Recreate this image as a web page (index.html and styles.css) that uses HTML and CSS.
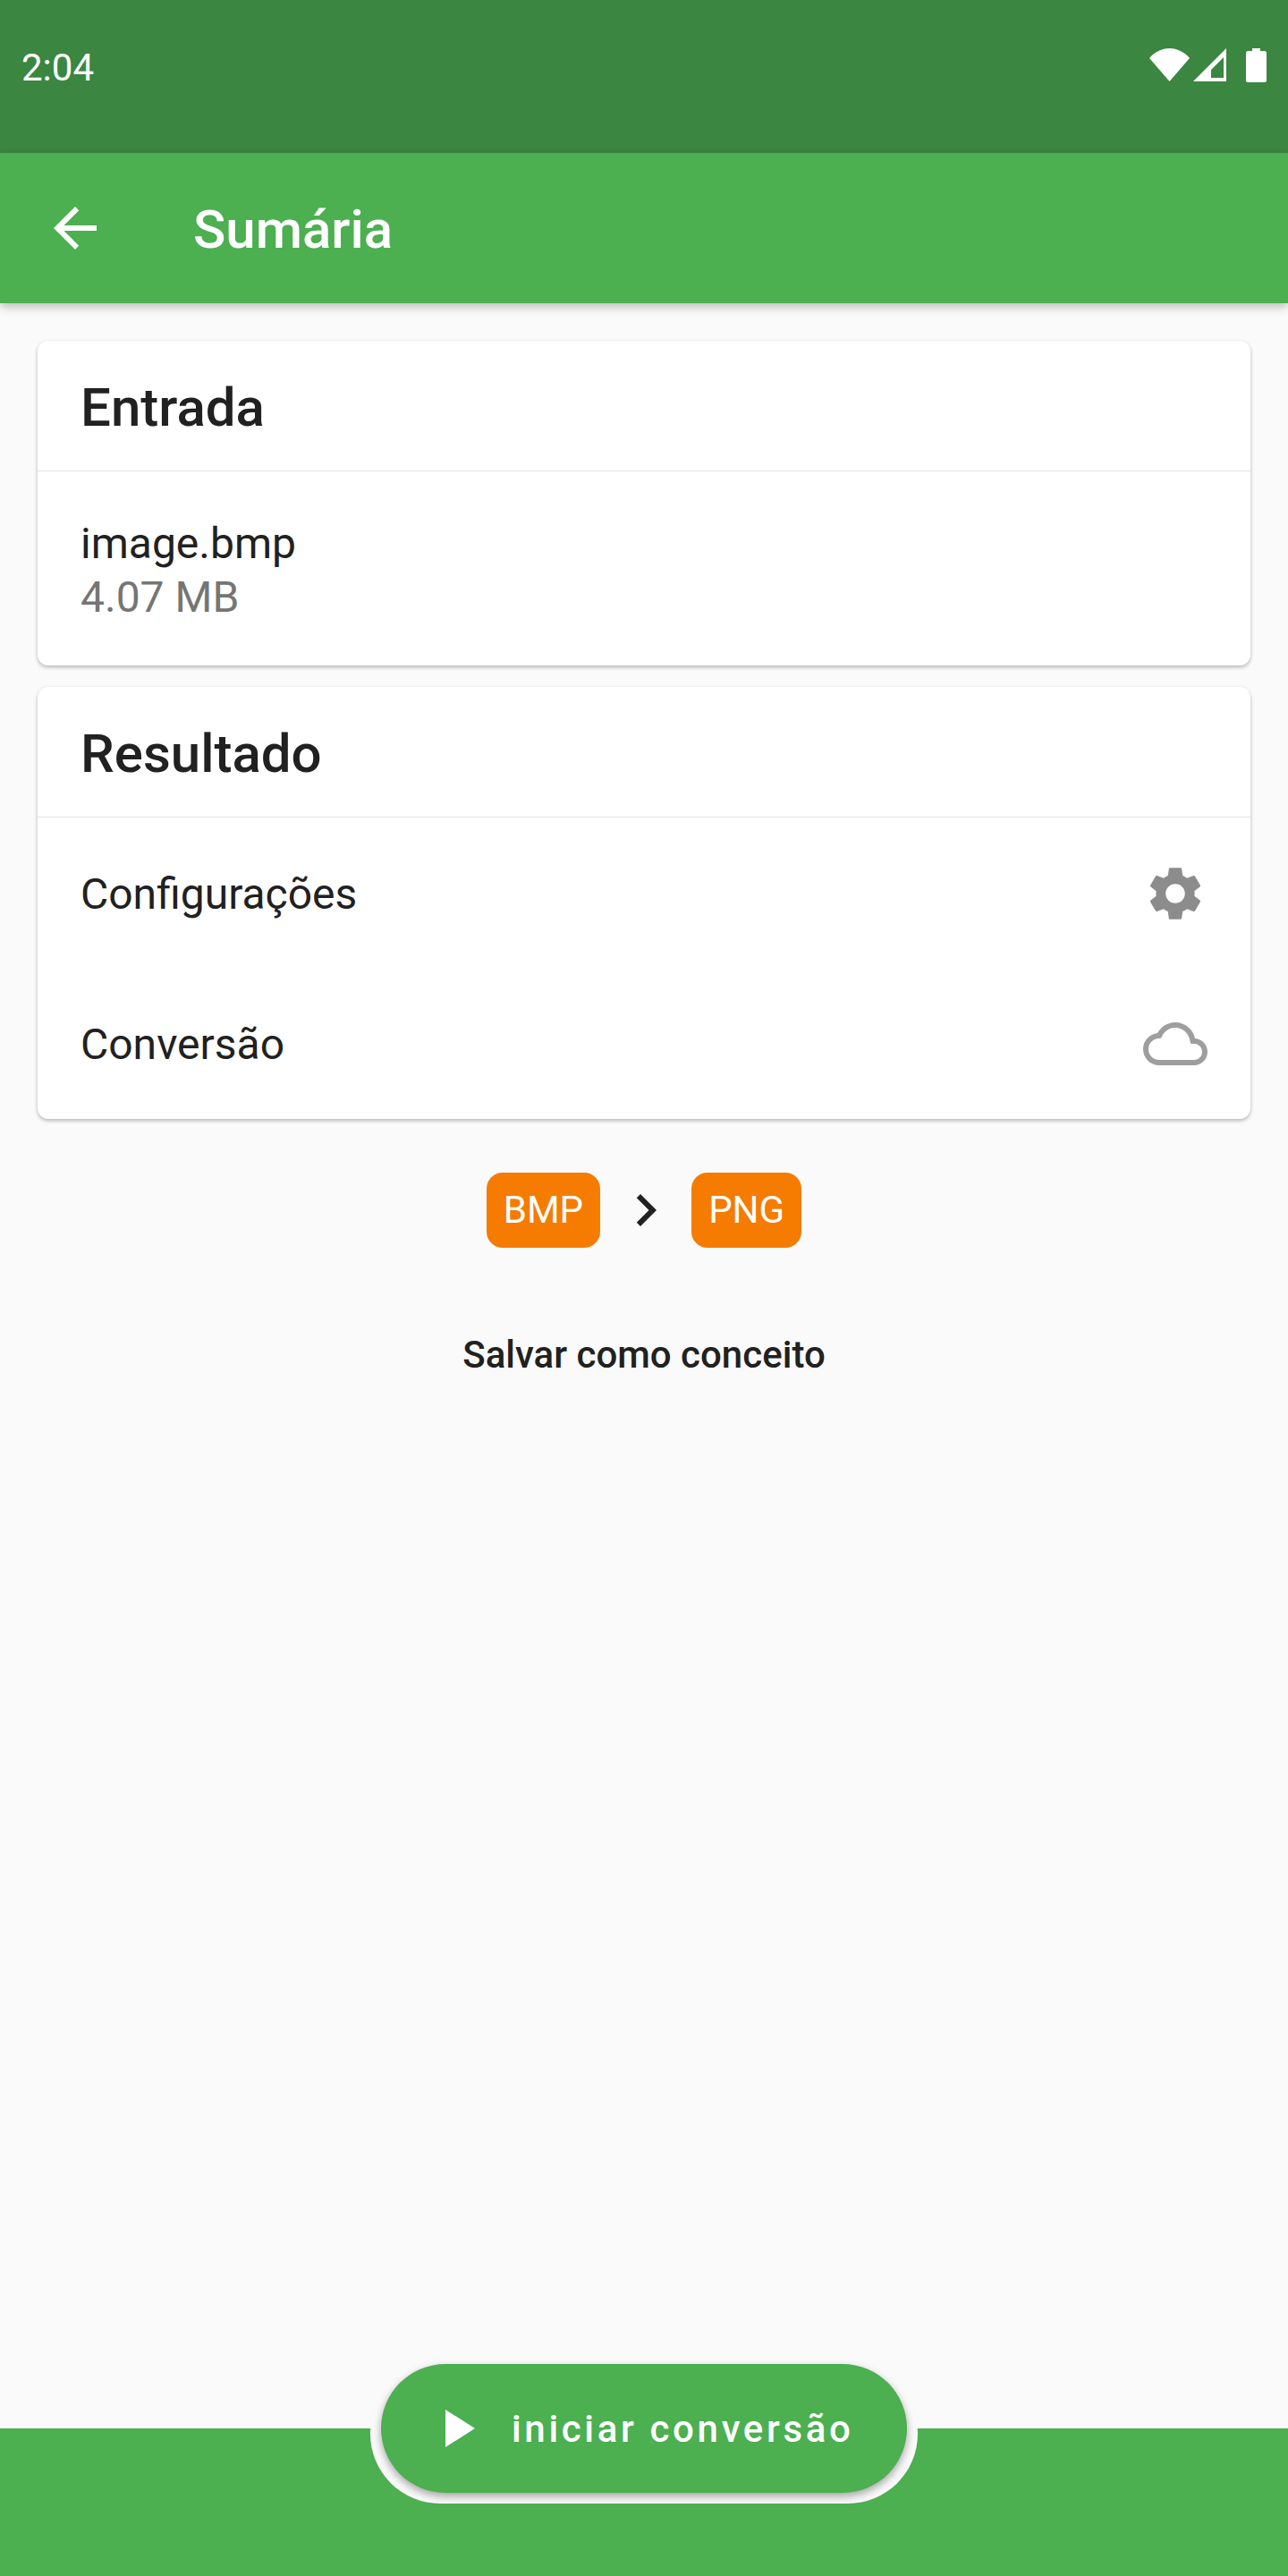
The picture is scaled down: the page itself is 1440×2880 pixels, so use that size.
FILE: index.html
```html
<!DOCTYPE html>
<html lang="pt">
<head>
  <meta charset="UTF-8" />
  <title>Sumária</title>
  <link rel="stylesheet" href="styles.css">
</head>
<body>
  <div class="page">
    <div class="status-bar">
      <span class="time">2:04</span>
      <div class="status-icons">
        <svg class="icon-wifi" viewBox="0 0 45 37"><path d="M0 11C6 4 14 0 22.500 0S39 4 45 11L22.500 37z"/></svg>
        <svg class="icon-signal" viewBox="0 0 37 37"><path fill-rule="evenodd" d="M37 0V37H0zM34 10 20 24V33H34z"/></svg>
        <svg class="icon-battery" viewBox="0 0 23 38"><path d="M7 0H16V3H21C22 3 23 4 23 5V36C23 37 22 38 21 38H2C1 38 0 37 0 36V5C0 4 1 3 2 3H7z"/></svg>
      </div>
    </div>

    <header class="app-bar">
      <svg class="icon" viewBox="0 0 24 24"><path fill="#fff" d="M20 11H7.830l5.590-5.590L12 4l-8 8 8 8 1.410-1.410L7.830 13H20v-2z"/></svg>
      <h1 class="app-title">Sumária</h1>
    </header>

    <main class="content">
      <section class="card">
        <h2 class="card-title">Entrada</h2>
        <div class="file-info">
          <div class="file-name">image.bmp</div>
          <div class="file-size">4.07 MB</div>
        </div>
      </section>

      <section class="card">
        <h2 class="card-title">Resultado</h2>
        <div class="rows">
          <div class="row">
            <span>Configurações</span>
            <svg class="icon" viewBox="0 0 24 24"><path fill="#8c8c8c" d="M19.140 12.940c.04-.3.06-.61.06-.94 0-.32-.02-.64-.07-.94l2.030-1.580c.18-.14.23-.41.12-.61l-1.920-3.320c-.12-.22-.37-.29-.59-.22l-2.390.96c-.5-.38-1.030-.7-1.620-.94l-.36-2.540c-.04-.24-.24-.41-.48-.41h-3.840c-.24 0-.43.17-.47.41l-.36 2.540c-.59.24-1.130.57-1.620.94l-2.390-.96c-.22-.08-.47 0-.59.22L2.740 8.870c-.12.21-.08.47.12.61l2.030 1.580c-.05.3-.09.63-.09.94s.02.64.07.94l-2.030 1.580c-.18.14-.23.41-.12.61l1.920 3.320c.12.22.37.29.59.22l2.390-.96c.5.38 1.030.7 1.620.94l.36 2.540c.05.24.24.41.48.41h3.840c.24 0 .44-.17.47-.41l.36-2.540c.59-.24 1.130-.56 1.620-.94l2.390.96c.22.08.47 0 .59-.22l1.920-3.320c.12-.22.07-.47-.12-.61l-2.010-1.580zM12 15.600c-1.980 0-3.600-1.620-3.600-3.600s1.620-3.600 3.600-3.600 3.600 1.620 3.600 3.600-1.620 3.600-3.600 3.600z"/></svg>
          </div>
          <div class="row">
            <span>Conversão</span>
            <svg class="icon" viewBox="0 0 24 24"><path fill="#9e9e9e" d="M12 6c2.620 0 4.880 1.860 5.390 4.430l.3 1.500 1.530.11c1.560.1 2.780 1.410 2.780 2.960 0 1.650-1.350 3-3 3H6c-2.210 0-4-1.790-4-4 0-2.050 1.530-3.760 3.560-3.970l1.070-.11.5-.95C8.080 7.140 9.940 6 12 6m0-2C9.110 4 6.600 5.640 5.350 8.040 2.340 8.360 0 10.910 0 14c0 3.310 2.690 6 6 6h13c2.760 0 5-2.240 5-5 0-2.640-2.050-4.780-4.650-4.960C18.670 6.590 15.640 4 12 4z"/></svg>
          </div>
        </div>
      </section>

      <div class="formats">
        <span class="tag">BMP</span>
        <svg class="icon" viewBox="0 0 24 24"><path fill="#212121" d="M10 6L8.590 7.410 13.170 12l-4.580 4.590L10 18l6-6z"/></svg>
        <span class="tag">PNG</span>
      </div>

      <div class="save-draft">Salvar como conceito</div>
    </main>

    <footer class="bottom-bar">
      <div class="notch"></div>
      <button class="start-button">
        <svg class="icon-play" viewBox="0 0 33 42"><path fill="#fff" d="M0 0L33 21 0 42z"/></svg>
        iniciar conversão
      </button>
    </footer>
  </div>
</body>
</html>
```

FILE: styles.css
```css
body {
  margin: 0;
  font-family: Roboto, sans-serif;
  color: #212121;
  background-color: #fafafa;
}
.page {
  display: flex;
  flex-direction: column;
  height: 2880px;
  overflow: hidden;
}
.icon {
  width: 72px;
  height: 72px;
  flex-shrink: 0;
}

/* status bar */
.status-bar {
  height: 171px;
  background-color: #3b8640;
  color: white;
  display: flex;
  justify-content: space-between;
  padding: 54px 24px 0;
  box-sizing: border-box;
}
.time {
  font-size: 42px;
  line-height: 42px;
  margin-top: 1px;
}
.status-icons {
  display: flex;
  align-items: flex-start;
  gap: 4px;
  fill: white;
}
.icon-wifi {
  width: 45px;
  height: 37px;
}
.icon-signal {
  width: 37px;
  height: 37px;
}
.icon-battery {
  width: 23px;
  height: 38px;
  margin-left: 18px;
}

/* app bar */
.app-bar {
  height: 168px;
  background-color: #4caf50;
  display: flex;
  align-items: center;
  padding-left: 48px;
  gap: 96px;
  box-shadow: 0 4px 10px rgba(0, 0, 0, 0.25);
  position: relative;
}
.app-title {
  margin: 3px 0 0;
  font-size: 60px;
  font-weight: 500;
  color: white;
}

/* cards */
.content {
  flex: 1;
  padding: 42px 42px 0;
}
.card {
  background: white;
  border-radius: 12px;
  box-shadow: 0 2px 4px rgba(0, 0, 0, 0.28);
  margin-bottom: 24px;
}
.card-title {
  margin: 0;
  height: 145px;
  line-height: 149px;
  padding-left: 48px;
  font-size: 60px;
  font-weight: 500;
  border-bottom: 1px solid #e4e4e4;
}
.file-info {
  padding: 51px 48px 46px;
}
.file-name,
.file-size {
  font-size: 48px;
  line-height: 60px;
}
.file-size {
  color: #757575;
}
.rows {
  padding-top: 1px;
}
.row {
  height: 168px;
  display: flex;
  align-items: center;
  justify-content: space-between;
  padding: 0 48px;
  font-size: 48px;
}

/* formats */
.formats {
  display: flex;
  justify-content: center;
  align-items: center;
  gap: 15px;
  margin-top: 60px;
}
.tag {
  height: 84px;
  line-height: 84px;
  padding: 0 19px;
  border-radius: 18px;
  background-color: #f57c00;
  color: white;
  font-size: 42px;
}
.save-draft {
  margin-top: 96px;
  text-align: center;
  font-size: 42px;
  font-weight: 500;
  line-height: 48px;
}

/* bottom bar */
.bottom-bar {
  height: 165px;
  background-color: #4caf50;
  position: relative;
}
.notch {
  position: absolute;
  left: 414px;
  top: -72px;
  width: 612px;
  height: 156px;
  border-radius: 78px;
  background-color: #fafafa;
  clip-path: inset(72px 0 0 0);
}
.start-button {
  position: absolute;
  left: 426px;
  top: -72px;
  width: 588px;
  height: 144px;
  border: none;
  border-radius: 72px;
  background-color: #4caf50;
  color: white;
  font-family: Roboto, sans-serif;
  font-size: 42px;
  font-weight: 500;
  letter-spacing: 3.65px;
  display: flex;
  align-items: center;
  padding: 0 0 0 72px;
  gap: 41px;
  box-shadow: 0 4px 10px rgba(0, 0, 0, 0.35);
}
.icon-play {
  width: 33px;
  height: 42px;
}
```
